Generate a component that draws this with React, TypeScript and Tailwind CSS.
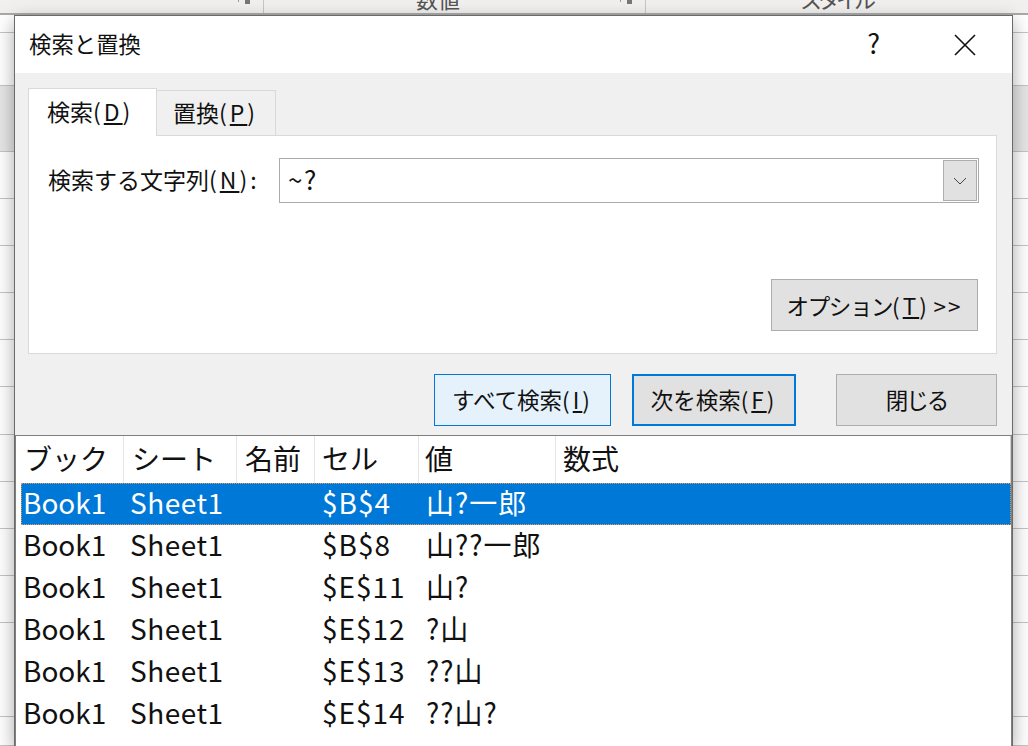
const FONT = "font-['Noto_Sans_CJK_JP','Noto_Sans',sans-serif]";
const COLS = "grid-cols-[108px_113px_78px_104px_137px_1fr]";
const ROW_COLS = "grid-cols-[103px_113px_78px_104px_137px_1fr]";

const rows = [
  ["Book1", "Sheet1", "", "$B$4", "山?一郎"],
  ["Book1", "Sheet1", "", "$B$8", "山??一郎"],
  ["Book1", "Sheet1", "", "$E$11", "山?"],
  ["Book1", "Sheet1", "", "$E$12", "?山"],
  ["Book1", "Sheet1", "", "$E$13", "??山"],
  ["Book1", "Sheet1", "", "$E$14", "??山?"],
];

const sheetRows = [
  "h-[20px] border-t-2 border-t-[#a9a9a9]", "h-[53px]", "h-[66px] bg-[#e6e6e6]", "h-[47px]", "h-[47px]", "h-[47px]", "h-[47px]", "h-[47px]",
  "h-[48px]", "h-[47px]", "h-[47px]", "h-[47px]", "h-[47px]", "h-[94px]", "h-[29px]",
];

function Acc({ k }: { k: string }) {
  return (
    <span className="tracking-[3px]">
      (<span className="underline underline-offset-[2px] decoration-[2px]">{k}</span>)
    </span>
  );
}

function Launcher() {
  return (
    <svg width="12" height="4" viewBox="0 0 12 4" className="shrink-0">
      <rect x="0" y="0" width="1" height="2" fill="#9a9a9a" />
      <rect x="7" y="0" width="5" height="4" fill="#777" />
    </svg>
  );
}

function Btn({ w, cls, children }: { w: string; cls: string; children: React.ReactNode }) {
  return (
    <div className={`${w} ${cls} h-[52px] flex items-center justify-center text-[22.5px] leading-[30px] text-[#111] whitespace-nowrap`}>
      {children}
    </div>
  );
}

export default function App() {
  return (
    <div className={`relative w-[1028px] h-[746px] overflow-hidden bg-white ${FONT}`}>
      <div className="h-[13px] flex overflow-hidden bg-[#f1f0ee] text-[#555] text-[22px] leading-[26px]">
        <div className="w-[264px] border-r border-[#c6c6c6] flex justify-end pr-[13px]">
          <Launcher />
        </div>
        <div className="w-[382px] border-r border-[#c6c6c6] flex justify-between pl-[152px] pr-[13px]">
          <span className="-mt-[15px]">数値</span>
          <Launcher />
        </div>
        <div className="flex-1 pl-[154px]">
          <span className="block -mt-[15px] tracking-[-4px]">スタイル</span>
        </div>
      </div>
      <div className="flex flex-col">
        {sheetRows.map((c, i) => (
          <div key={i} className={`${c} border-b border-b-[#c4c4c4] shrink-0`} />
        ))}
      </div>

      <div className="absolute left-[14px] top-[15px] w-[999px] h-[731px] flex flex-col border-x border-t border-[#6a6a6a] shadow-[0_6px_18px_rgba(0,0,0,0.34)] bg-white">
        <div className="h-[57px] shrink-0 flex items-center bg-white pl-[14px] text-[22.4px] leading-[30px] text-[#111]">
          <span className="flex-1 -mt-[3px]">検索と置換</span>
          <span className="text-[27px] mr-[74px] -mt-[3px]">?</span>
          <svg className="mr-[36px]" width="22" height="22" viewBox="0 0 22 22" fill="none" stroke="#111" strokeWidth="1.6">
            <path d="M1 1 L21 21 M21 1 L1 21" />
          </svg>
        </div>

        <div className="h-[362px] shrink-0 bg-[#f0f0f0] pt-[15px] pl-[13px] flex flex-col">
          <div className="flex items-end h-[47px] text-[23px] leading-[30px] text-[#111]">
            <div className="relative z-10 w-[129px] h-[48px] -mb-[1px] bg-white border-x border-t border-[#d9d9d9] pl-[18px] pt-[7px] whitespace-nowrap">
              検索<Acc k="D" />
            </div>
            <div className="w-[119px] h-[45px] border-r border-t border-[#d9d9d9] pl-[16px] pt-[6px] whitespace-nowrap">
              置換<Acc k="P" />
            </div>
          </div>
          <div className="w-[969px] h-[219px] bg-white border border-[#d9d9d9] flex flex-col">
            <div className="flex items-start mt-[22px] pl-[19px]">
              <div className="w-[231px] h-[45px] flex items-center pb-[4px] text-[23px] leading-[30px] text-[#111] whitespace-nowrap">
                <span>検索する文字列<Acc k="N" />:</span>
              </div>
              <div className="w-[700px] h-[45px] border border-[#ababab] flex items-center justify-between pl-[8px] pr-[1px] text-[26px] leading-[30px] text-[#111]">
                <span className="tracking-[1.5px] -mt-[3px]">~?</span>
                <div className="w-[34px] h-[41px] bg-[#e1e1e1] border border-[#adadad] flex items-center justify-center">
                  <svg width="14" height="8" viewBox="0 0 14 8" fill="none" stroke="#444" strokeWidth="1">
                    <path d="M1 1 L7 7 L13 1" />
                  </svg>
                </div>
              </div>
            </div>
            <div className="mt-auto mb-[22px] mr-[18px] self-end">
              <Btn w="w-[207px]" cls="bg-[#e1e1e1] border border-[#adadad]">
                <span className="-mt-[1px] tracking-[-1.4px]">オプション<Acc k="T" /> <span className="tracking-[2px]">&gt;&gt;</span></span>
              </Btn>
            </div>
          </div>
          <div className="flex justify-end items-start mt-[20px] pr-[15px]">
            <Btn w="w-[177px]" cls="bg-[#e5f1fb] border border-[#0078d7]">
              <span className="-mt-[3px]">すべて検索<Acc k="I" /></span>
            </Btn>
            <Btn w="w-[164px] ml-[21px]" cls="bg-[#e1e1e1] border-2 border-[#0078d7]">
              <span className="-mt-[3px]">次を検索<Acc k="F" /></span>
            </Btn>
            <Btn w="w-[161px] ml-[40px]" cls="bg-[#e1e1e1] border border-[#adadad]">
              <span className="-mt-[3px] tracking-[-2px]">閉じる</span>
            </Btn>
          </div>
        </div>

        <div className="flex-1 bg-white border-x border-t border-[#808080] flex flex-col text-[28px] leading-[40px] text-[#111]">
          <div className={`grid ${COLS} h-[47px] shrink-0 items-stretch`}>
            {["ブック", "シート", "名前", "セル", "値", "数式"].map((h, i) => (
              <div
                key={h}
                className={`flex items-center pb-[4px] ${["pl-[8px]", "pl-[8px]", "pl-[8px]", "pl-[7px]", "pl-[6px]", "pl-[7px]"][i]} ${i < 5 ? "border-r border-[#e5e5e5]" : "border-r border-[#d0d0d0]"}`}
              >
                {h}
              </div>
            ))}
          </div>
          {rows.map((r, i) => (
            <div
              key={i}
              className={`grid ${ROW_COLS} ml-[5px] h-[42px] shrink-0 items-center border border-dotted ${
                i === 0 ? "bg-[#0078d7] text-white border-[#e89a4c]" : "border-transparent"
              }`}
            >
              {r.map((c, j) => (
                <div key={j} className={["pl-[1px]", "pl-[5px] tracking-[0.5px]", "", "pl-[6px] tracking-[1px]", "pl-[6px] tracking-[1px]"][j] + " whitespace-nowrap -mt-[4px]"}>
                  {c}
                </div>
              ))}
            </div>
          ))}
        </div>
      </div>
    </div>
  );
}
